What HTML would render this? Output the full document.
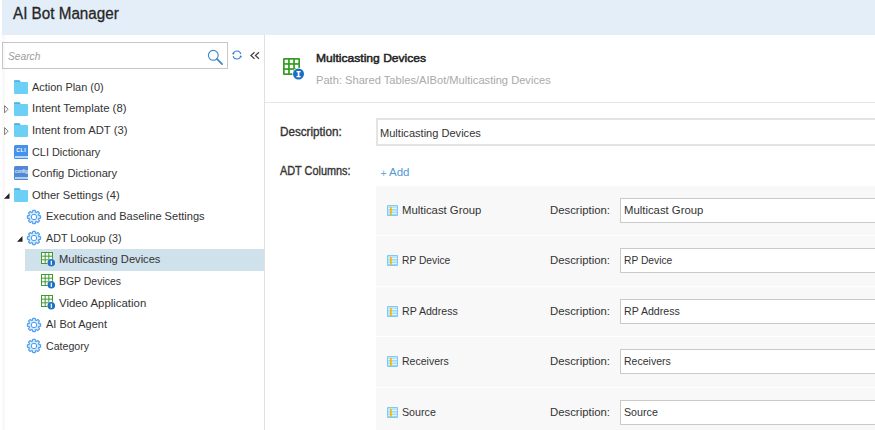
<!DOCTYPE html>
<html><head><meta charset="utf-8">
<style>
*{margin:0;padding:0;box-sizing:border-box}
html,body{width:875px;height:430px;overflow:hidden;background:#fff}
body{position:relative;font-family:"Liberation Sans",sans-serif;color:#333}
.a{position:absolute;display:block}
.t{position:absolute;white-space:nowrap}
.inp{position:absolute;border:1px solid #d0d0d0;background:#fff}
.row{position:absolute;left:376px;width:499px;background:#f8f8f8}
</style></head><body>

<div class="a" style="left:2px;top:0;width:873px;height:35px;background:#e3eef8"></div>
<div class="a" style="left:2px;top:35px;width:3px;height:395px;background:#f9f9f9"></div>
<div id="hdr" class="t" style="left:12.5px;top:4.36px;font-size:16px;line-height:20px;font-weight:normal;font-style:normal;color:#262626;letter-spacing:0.000px;transform:scaleX(0.9516);transform-origin:0 0;-webkit-text-stroke:0.3px #262626">AI Bot Manager</div>
<div class="a" style="left:2px;top:42px;width:226px;height:27px;border:1px solid #c6c6c6"></div>
<div id="search" class="t" style="left:8px;top:49.02px;font-size:11.5px;line-height:14px;font-weight:normal;font-style:italic;color:#9c9c9c;letter-spacing:0.000px;transform:scaleX(0.8889);transform-origin:0 0">Search</div>
<svg class="a" style="left:205px;top:47px" width="20" height="20" viewBox="0 0 20 20"><circle cx="8.3" cy="8.3" r="4.9" fill="none" stroke="#3a86c6" stroke-width="1.1"/><path d="M11.9,11.9 L17.1,17.1" stroke="#3a86c6" stroke-width="1.7" stroke-linecap="round"/></svg>
<svg class="a" style="left:230.5px;top:49.2px" width="12" height="12" viewBox="0 0 12 12"><path d="M2.24,4.68 A4,4 0 0 1 9.86,5.01" fill="none" stroke="#3a86d0" stroke-width="1.05"/><path d="M9.76,7.42 A4,4 0 0 1 2.14,7.09" fill="none" stroke="#3a86d0" stroke-width="1.05"/><circle cx="2.3" cy="4.6" r="1.0" fill="#2f7fcc"/><circle cx="9.7" cy="7.5" r="1.0" fill="#2f7fcc"/></svg>
<svg class="a" style="left:249px;top:50px" width="12" height="11" viewBox="0 0 12 11"><path d="M5.5,2.2 L1.9,5.5 L5.5,8.8 M10,2.2 L6.4,5.5 L10,8.8" fill="none" stroke="#454545" stroke-width="1.25"/></svg>
<div class="a" style="left:264px;top:35px;width:1px;height:395px;background:#e0e0e0"></div>
<div class="a" style="left:25px;top:249px;width:239px;height:21.5px;background:#cfe1eb"></div>
<svg class="a" style="left:14px;top:80.0px" width="14" height="14" viewBox="0 0 14 14"><path d="M1,0.5 H5.5 L6.5,2 H13 Q14,2 14,3 V13 Q14,14 13,14 H1 Q0,14 0,13 V1.5 Q0,0.5 1,0.5Z" fill="#6ccff6"/><path d="M1,0.3 H5.5 L6.8,2 H0 V1.3 Q0,0.3 1,0.3Z" fill="#4fb3de"/></svg>
<div id="tr0" class="t" style="left:32px;top:79.82px;font-size:11.5px;line-height:14px;font-weight:normal;font-style:normal;color:#333;letter-spacing:0.000px;transform:scaleX(0.9496);transform-origin:0 0">Action Plan (0)</div>
<svg class="a" style="left:14px;top:101.6px" width="14" height="14" viewBox="0 0 14 14"><path d="M1,0.5 H5.5 L6.5,2 H13 Q14,2 14,3 V13 Q14,14 13,14 H1 Q0,14 0,13 V1.5 Q0,0.5 1,0.5Z" fill="#6ccff6"/><path d="M1,0.3 H5.5 L6.8,2 H0 V1.3 Q0,0.3 1,0.3Z" fill="#4fb3de"/></svg>
<svg class="a" style="left:3.6px;top:105.0px" width="6" height="9" viewBox="0 0 6 9"><path d="M0.6,0.6 L4.1,4.2 L0.6,7.8Z" fill="none" stroke="#7a7a7a" stroke-width="1"/></svg>
<div id="tr1" class="t" style="left:32px;top:101.40px;font-size:11.5px;line-height:14px;font-weight:normal;font-style:normal;color:#333;letter-spacing:0.000px;transform:scaleX(0.9875);transform-origin:0 0">Intent Template (8)</div>
<svg class="a" style="left:14px;top:123.2px" width="14" height="14" viewBox="0 0 14 14"><path d="M1,0.5 H5.5 L6.5,2 H13 Q14,2 14,3 V13 Q14,14 13,14 H1 Q0,14 0,13 V1.5 Q0,0.5 1,0.5Z" fill="#6ccff6"/><path d="M1,0.3 H5.5 L6.8,2 H0 V1.3 Q0,0.3 1,0.3Z" fill="#4fb3de"/></svg>
<svg class="a" style="left:3.6px;top:126.6px" width="6" height="9" viewBox="0 0 6 9"><path d="M0.6,0.6 L4.1,4.2 L0.6,7.8Z" fill="none" stroke="#7a7a7a" stroke-width="1"/></svg>
<div id="tr2" class="t" style="left:32px;top:122.98px;font-size:11.5px;line-height:14px;font-weight:normal;font-style:normal;color:#333;letter-spacing:0.000px;transform:scaleX(0.9775);transform-origin:0 0">Intent from ADT (3)</div>
<svg class="a" style="left:14px;top:144.5px" width="14" height="14" viewBox="0 0 14 14"><path d="M1.5,0 H14 V11 H2 Q1,11 1,12 Q1,13 2,13 H14 V14 H1.5 Q0,14 0,12.5 V1.5 Q0,0 1.5,0Z" fill="#4592ea"/><rect x="1" y="11" width="13" height="2" rx="1" fill="#b9d8f8"/><text x="7.2" y="6.8" font-size="5" font-weight="bold" fill="#fff" text-anchor="middle" font-family="Liberation Sans" letter-spacing="0.6">CLI</text></svg>
<div id="tr3" class="t" style="left:32px;top:144.56px;font-size:11.5px;line-height:14px;font-weight:normal;font-style:normal;color:#333;letter-spacing:0.000px;transform:scaleX(0.9452);transform-origin:0 0">CLI Dictionary</div>
<svg class="a" style="left:14px;top:166.0px" width="14" height="14" viewBox="0 0 14 14"><path d="M1.5,0 H14 V11 H2 Q1,11 1,12 Q1,13 2,13 H14 V14 H1.5 Q0,14 0,12.5 V1.5 Q0,0 1.5,0Z" fill="#5388d4"/><rect x="1" y="11" width="13" height="2" rx="1" fill="#b5cdef"/><text x="7.3" y="7.2" font-size="4.8" font-weight="bold" fill="#d9e5f7" text-anchor="middle" font-family="Liberation Sans" letter-spacing="-0.25">config</text></svg>
<div id="tr4" class="t" style="left:32px;top:166.14px;font-size:11.5px;line-height:14px;font-weight:normal;font-style:normal;color:#333;letter-spacing:0.000px;transform:scaleX(0.9728);transform-origin:0 0">Config Dictionary</div>
<svg class="a" style="left:14px;top:187.9px" width="14" height="14" viewBox="0 0 14 14"><path d="M1,0.5 H5.5 L6.5,2 H13 Q14,2 14,3 V13 Q14,14 13,14 H1 Q0,14 0,13 V1.5 Q0,0.5 1,0.5Z" fill="#6ccff6"/><path d="M1,0.3 H5.5 L6.8,2 H0 V1.3 Q0,0.3 1,0.3Z" fill="#4fb3de"/></svg>
<svg class="a" style="left:3.8px;top:193.0px" width="6" height="6" viewBox="0 0 6 6"><path d="M5.5,0 V5.8 H0Z" fill="#222"/></svg>
<div id="tr5" class="t" style="left:32px;top:187.72px;font-size:11.5px;line-height:14px;font-weight:normal;font-style:normal;color:#333;letter-spacing:0.000px;transform:scaleX(0.9650);transform-origin:0 0">Other Settings (4)</div>
<svg class="a" style="left:26.299999999999997px;top:208.8px" width="16" height="16" viewBox="-8 -8 16 16"><path d="M-1.64,-4.72 L-1.18,-6.60 L1.18,-6.60 L1.64,-4.72 L2.18,-4.50 L3.83,-5.50 L5.50,-3.83 L4.50,-2.18 L4.72,-1.64 L6.60,-1.18 L6.60,1.18 L4.72,1.64 L4.50,2.18 L5.50,3.83 L3.83,5.50 L2.18,4.50 L1.64,4.72 L1.18,6.60 L-1.18,6.60 L-1.64,4.72 L-2.18,4.50 L-3.83,5.50 L-5.50,3.83 L-4.50,2.18 L-4.72,1.64 L-6.60,1.18 L-6.60,-1.18 L-4.72,-1.64 L-4.50,-2.18 L-5.50,-3.83 L-3.83,-5.50 L-2.18,-4.50Z" fill="#d6e9fc" stroke="#4f9ff2" stroke-width="1.15" stroke-linejoin="round"/><circle r="2.7" fill="none" stroke="#4a9df2" stroke-width="1.0"/><circle r="2.0" fill="#fff"/></svg>
<div id="tr6" class="t" style="left:46px;top:209.30px;font-size:11.5px;line-height:14px;font-weight:normal;font-style:normal;color:#333;letter-spacing:0.000px;transform:scaleX(0.9613);transform-origin:0 0">Execution and Baseline Settings</div>
<svg class="a" style="left:26.299999999999997px;top:230.4px" width="16" height="16" viewBox="-8 -8 16 16"><path d="M-1.64,-4.72 L-1.18,-6.60 L1.18,-6.60 L1.64,-4.72 L2.18,-4.50 L3.83,-5.50 L5.50,-3.83 L4.50,-2.18 L4.72,-1.64 L6.60,-1.18 L6.60,1.18 L4.72,1.64 L4.50,2.18 L5.50,3.83 L3.83,5.50 L2.18,4.50 L1.64,4.72 L1.18,6.60 L-1.18,6.60 L-1.64,4.72 L-2.18,4.50 L-3.83,5.50 L-5.50,3.83 L-4.50,2.18 L-4.72,1.64 L-6.60,1.18 L-6.60,-1.18 L-4.72,-1.64 L-4.50,-2.18 L-5.50,-3.83 L-3.83,-5.50 L-2.18,-4.50Z" fill="#d6e9fc" stroke="#4f9ff2" stroke-width="1.15" stroke-linejoin="round"/><circle r="2.7" fill="none" stroke="#4a9df2" stroke-width="1.0"/><circle r="2.0" fill="#fff"/></svg>
<svg class="a" style="left:17px;top:236.2px" width="6" height="6" viewBox="0 0 6 6"><path d="M5.5,0 V5.8 H0Z" fill="#222"/></svg>
<div id="tr7" class="t" style="left:46px;top:230.88px;font-size:11.5px;line-height:14px;font-weight:normal;font-style:normal;color:#333;letter-spacing:0.000px;transform:scaleX(0.9335);transform-origin:0 0">ADT Lookup (3)</div>
<svg class="a" style="left:40.7px;top:252.2px" width="16" height="16" viewBox="0 0 16 16"><rect x="0" y="0" width="12" height="12" fill="#3b9a2a"/><rect x="0.97" y="0.97" width="2.7" height="2.7" fill="#fff"/><rect x="0.97" y="4.65" width="2.7" height="2.7" fill="#fff"/><rect x="0.97" y="8.32" width="2.7" height="2.7" fill="#fff"/><rect x="4.65" y="0.97" width="2.7" height="2.7" fill="#fff"/><rect x="4.65" y="4.65" width="2.7" height="2.7" fill="#fff"/><rect x="4.65" y="8.32" width="2.7" height="2.7" fill="#fff"/><rect x="8.32" y="0.97" width="2.7" height="2.7" fill="#fff"/><rect x="8.32" y="4.65" width="2.7" height="2.7" fill="#fff"/><rect x="8.32" y="8.32" width="2.7" height="2.7" fill="#fff"/><circle cx="10.3" cy="10.8" r="4.2" fill="#fff" fill-opacity="0.6"/><circle cx="10.3" cy="10.8" r="3.8" fill="#2272c3"/><rect x="9.7" y="8.7" width="1.2" height="4.2" fill="#fff"/></svg>
<div id="tr8" class="t" style="left:59px;top:252.46px;font-size:11.5px;line-height:14px;font-weight:normal;font-style:normal;color:#333;letter-spacing:0.000px;transform:scaleX(0.9677);transform-origin:0 0">Multicasting Devices</div>
<svg class="a" style="left:40.7px;top:273.8px" width="16" height="16" viewBox="0 0 16 16"><rect x="0" y="0" width="12" height="12" fill="#3b9a2a"/><rect x="0.97" y="0.97" width="2.7" height="2.7" fill="#fff"/><rect x="0.97" y="4.65" width="2.7" height="2.7" fill="#fff"/><rect x="0.97" y="8.32" width="2.7" height="2.7" fill="#fff"/><rect x="4.65" y="0.97" width="2.7" height="2.7" fill="#fff"/><rect x="4.65" y="4.65" width="2.7" height="2.7" fill="#fff"/><rect x="4.65" y="8.32" width="2.7" height="2.7" fill="#fff"/><rect x="8.32" y="0.97" width="2.7" height="2.7" fill="#fff"/><rect x="8.32" y="4.65" width="2.7" height="2.7" fill="#fff"/><rect x="8.32" y="8.32" width="2.7" height="2.7" fill="#fff"/><circle cx="10.3" cy="10.8" r="4.2" fill="#fff" fill-opacity="0.6"/><circle cx="10.3" cy="10.8" r="3.8" fill="#2272c3"/><rect x="9.7" y="8.7" width="1.2" height="4.2" fill="#fff"/></svg>
<div id="tr9" class="t" style="left:59px;top:274.04px;font-size:11.5px;line-height:14px;font-weight:normal;font-style:normal;color:#333;letter-spacing:0.000px;transform:scaleX(0.9089);transform-origin:0 0">BGP Devices</div>
<svg class="a" style="left:40.7px;top:295.4px" width="16" height="16" viewBox="0 0 16 16"><rect x="0" y="0" width="12" height="12" fill="#3b9a2a"/><rect x="0.97" y="0.97" width="2.7" height="2.7" fill="#fff"/><rect x="0.97" y="4.65" width="2.7" height="2.7" fill="#fff"/><rect x="0.97" y="8.32" width="2.7" height="2.7" fill="#fff"/><rect x="4.65" y="0.97" width="2.7" height="2.7" fill="#fff"/><rect x="4.65" y="4.65" width="2.7" height="2.7" fill="#fff"/><rect x="4.65" y="8.32" width="2.7" height="2.7" fill="#fff"/><rect x="8.32" y="0.97" width="2.7" height="2.7" fill="#fff"/><rect x="8.32" y="4.65" width="2.7" height="2.7" fill="#fff"/><rect x="8.32" y="8.32" width="2.7" height="2.7" fill="#fff"/><circle cx="10.3" cy="10.8" r="4.2" fill="#fff" fill-opacity="0.6"/><circle cx="10.3" cy="10.8" r="3.8" fill="#2272c3"/><rect x="9.7" y="8.7" width="1.2" height="4.2" fill="#fff"/></svg>
<div id="tr10" class="t" style="left:59px;top:295.62px;font-size:11.5px;line-height:14px;font-weight:normal;font-style:normal;color:#333;letter-spacing:0.000px;transform:scaleX(0.9911);transform-origin:0 0">Video Application</div>
<svg class="a" style="left:26.299999999999997px;top:316.7px" width="16" height="16" viewBox="-8 -8 16 16"><path d="M-1.64,-4.72 L-1.18,-6.60 L1.18,-6.60 L1.64,-4.72 L2.18,-4.50 L3.83,-5.50 L5.50,-3.83 L4.50,-2.18 L4.72,-1.64 L6.60,-1.18 L6.60,1.18 L4.72,1.64 L4.50,2.18 L5.50,3.83 L3.83,5.50 L2.18,4.50 L1.64,4.72 L1.18,6.60 L-1.18,6.60 L-1.64,4.72 L-2.18,4.50 L-3.83,5.50 L-5.50,3.83 L-4.50,2.18 L-4.72,1.64 L-6.60,1.18 L-6.60,-1.18 L-4.72,-1.64 L-4.50,-2.18 L-5.50,-3.83 L-3.83,-5.50 L-2.18,-4.50Z" fill="#d6e9fc" stroke="#4f9ff2" stroke-width="1.15" stroke-linejoin="round"/><circle r="2.7" fill="none" stroke="#4a9df2" stroke-width="1.0"/><circle r="2.0" fill="#fff"/></svg>
<div id="tr11" class="t" style="left:46px;top:317.20px;font-size:11.5px;line-height:14px;font-weight:normal;font-style:normal;color:#333;letter-spacing:0.000px;transform:scaleX(0.9531);transform-origin:0 0">AI Bot Agent</div>
<svg class="a" style="left:26.299999999999997px;top:338.3px" width="16" height="16" viewBox="-8 -8 16 16"><path d="M-1.64,-4.72 L-1.18,-6.60 L1.18,-6.60 L1.64,-4.72 L2.18,-4.50 L3.83,-5.50 L5.50,-3.83 L4.50,-2.18 L4.72,-1.64 L6.60,-1.18 L6.60,1.18 L4.72,1.64 L4.50,2.18 L5.50,3.83 L3.83,5.50 L2.18,4.50 L1.64,4.72 L1.18,6.60 L-1.18,6.60 L-1.64,4.72 L-2.18,4.50 L-3.83,5.50 L-5.50,3.83 L-4.50,2.18 L-4.72,1.64 L-6.60,1.18 L-6.60,-1.18 L-4.72,-1.64 L-4.50,-2.18 L-5.50,-3.83 L-3.83,-5.50 L-2.18,-4.50Z" fill="#d6e9fc" stroke="#4f9ff2" stroke-width="1.15" stroke-linejoin="round"/><circle r="2.7" fill="none" stroke="#4a9df2" stroke-width="1.0"/><circle r="2.0" fill="#fff"/></svg>
<div id="tr12" class="t" style="left:46px;top:338.78px;font-size:11.5px;line-height:14px;font-weight:normal;font-style:normal;color:#333;letter-spacing:0.000px;transform:scaleX(0.9240);transform-origin:0 0">Category</div>
<div class="a" style="left:265px;top:102px;width:610px;height:1px;background:#e6e6e6"></div>
<svg class="a" style="left:283px;top:58px" width="24" height="24" viewBox="0 0 24 24"><rect x="0" y="0" width="17" height="17" rx="1" fill="#319d21"/><rect x="1.70" y="1.70" width="3.4" height="3.4" fill="#fff"/><rect x="1.70" y="6.80" width="3.4" height="3.4" fill="#fff"/><rect x="1.70" y="11.90" width="3.4" height="3.4" fill="#fff"/><rect x="6.80" y="1.70" width="3.4" height="3.4" fill="#fff"/><rect x="6.80" y="6.80" width="3.4" height="3.4" fill="#fff"/><rect x="6.80" y="11.90" width="3.4" height="3.4" fill="#fff"/><rect x="11.90" y="1.70" width="3.4" height="3.4" fill="#fff"/><rect x="11.90" y="6.80" width="3.4" height="3.4" fill="#fff"/><rect x="11.90" y="11.90" width="3.4" height="3.4" fill="#fff"/><circle cx="15.5" cy="16" r="6.2" fill="#fff"/><circle cx="15.5" cy="16" r="5.5" fill="#1b6fc4"/><rect x="14.7" y="13.4" width="1.7" height="5.4" fill="#fff"/><rect x="13.5" y="13" width="4.1" height="1.3" fill="#fff"/><rect x="13.5" y="18" width="4.1" height="1.3" fill="#fff"/></svg>
<div id="title" class="t" style="left:316px;top:51.41px;font-size:11.8px;line-height:15px;font-weight:normal;font-style:normal;color:#222;letter-spacing:0.000px;transform:scaleX(1.0239);transform-origin:0 0;-webkit-text-stroke:0.5px #222">Multicasting Devices</div>
<div id="path" class="t" style="left:316px;top:72.92px;font-size:11.5px;line-height:14px;font-weight:normal;font-style:normal;color:#aaa;letter-spacing:0.000px;transform:scaleX(0.9671);transform-origin:0 0">Path: Shared Tables/AIBot/Multicasting Devices</div>
<div id="lbl1" class="t" style="left:280px;top:125.04px;font-size:12px;line-height:15px;font-weight:normal;font-style:normal;color:#333;letter-spacing:0.000px;transform:scaleX(0.9728);transform-origin:0 0;-webkit-text-stroke:0.35px #333">Description:</div>
<div class="inp" style="left:376px;top:118px;width:520px;height:28px;border-color:#e4e4e4;border-width:2px"></div>
<div id="inp1" class="t" style="left:380px;top:125.82px;font-size:11.5px;line-height:14px;font-weight:normal;font-style:normal;color:#333;letter-spacing:0.000px;transform:scaleX(0.9619);transform-origin:0 0">Multicasting Devices</div>
<div id="lbl2" class="t" style="left:279.5px;top:164.44px;font-size:12px;line-height:15px;font-weight:normal;font-style:normal;color:#333;letter-spacing:0.000px;transform:scaleX(0.9069);transform-origin:0 0;-webkit-text-stroke:0.35px #333">ADT Columns:</div>
<div id="plus" class="t" style="left:380.5px;top:166.86px;font-size:10.5px;line-height:13px;font-weight:normal;font-style:normal;color:#6aa5dd;letter-spacing:0.000px">+</div>
<div id="add" class="t" style="left:389px;top:165.02px;font-size:11.5px;line-height:14px;font-weight:normal;font-style:normal;color:#5597d8;letter-spacing:0.000px">Add</div>
<div class="row" style="top:186.0px;height:49.4px"></div>
<svg class="a" style="left:387px;top:205.0px" width="11" height="11" viewBox="0 0 11 11"><rect x="0" y="0" width="11" height="11" rx="1" fill="#7dcbf4"/><rect x="1" y="1" width="9" height="9" fill="#9cd8f8"/><rect x="1" y="1" width="9" height="1.6" fill="#c4e8fb"/><rect x="1" y="3.0" width="9" height="0.9" fill="#eef8fe"/><rect x="1" y="5.6" width="9" height="0.9" fill="#eef8fe"/><rect x="1" y="7.9" width="9" height="0.9" fill="#eef8fe"/><rect x="3" y="1.8" width="1.7" height="8.2" fill="#f6b800"/></svg>
<div id="rn0" class="t" style="left:402px;top:202.92px;font-size:11.5px;line-height:14px;font-weight:normal;font-style:normal;color:#333;letter-spacing:0.000px;transform:scaleX(0.9853);transform-origin:0 0">Multicast Group</div>
<div id="rd0" class="t" style="left:550px;top:202.92px;font-size:11.5px;line-height:14px;font-weight:normal;font-style:normal;color:#333;letter-spacing:0.000px;transform:scaleX(0.9870);transform-origin:0 0">Description:</div>
<div class="inp" style="left:620px;top:198.0px;width:300px;height:25px;border-color:#cacaca"></div>
<div id="ri0" class="t" style="left:624px;top:202.92px;font-size:11.5px;line-height:14px;font-weight:normal;font-style:normal;color:#333;letter-spacing:0.000px;transform:scaleX(0.9853);transform-origin:0 0">Multicast Group</div>
<div class="row" style="top:236.4px;height:49.4px"></div>
<svg class="a" style="left:387px;top:255.4px" width="11" height="11" viewBox="0 0 11 11"><rect x="0" y="0" width="11" height="11" rx="1" fill="#7dcbf4"/><rect x="1" y="1" width="9" height="9" fill="#9cd8f8"/><rect x="1" y="1" width="9" height="1.6" fill="#c4e8fb"/><rect x="1" y="3.0" width="9" height="0.9" fill="#eef8fe"/><rect x="1" y="5.6" width="9" height="0.9" fill="#eef8fe"/><rect x="1" y="7.9" width="9" height="0.9" fill="#eef8fe"/><rect x="3" y="1.8" width="1.7" height="8.2" fill="#f6b800"/></svg>
<div id="rn1" class="t" style="left:402px;top:253.32px;font-size:11.5px;line-height:14px;font-weight:normal;font-style:normal;color:#333;letter-spacing:0.000px;transform:scaleX(0.8928);transform-origin:0 0">RP Device</div>
<div id="rd1" class="t" style="left:550px;top:253.32px;font-size:11.5px;line-height:14px;font-weight:normal;font-style:normal;color:#333;letter-spacing:0.000px;transform:scaleX(0.9870);transform-origin:0 0">Description:</div>
<div class="inp" style="left:620px;top:248.4px;width:300px;height:25px;border-color:#cacaca"></div>
<div id="ri1" class="t" style="left:624px;top:253.32px;font-size:11.5px;line-height:14px;font-weight:normal;font-style:normal;color:#333;letter-spacing:0.000px;transform:scaleX(0.8928);transform-origin:0 0">RP Device</div>
<div class="row" style="top:286.8px;height:49.4px"></div>
<svg class="a" style="left:387px;top:305.8px" width="11" height="11" viewBox="0 0 11 11"><rect x="0" y="0" width="11" height="11" rx="1" fill="#7dcbf4"/><rect x="1" y="1" width="9" height="9" fill="#9cd8f8"/><rect x="1" y="1" width="9" height="1.6" fill="#c4e8fb"/><rect x="1" y="3.0" width="9" height="0.9" fill="#eef8fe"/><rect x="1" y="5.6" width="9" height="0.9" fill="#eef8fe"/><rect x="1" y="7.9" width="9" height="0.9" fill="#eef8fe"/><rect x="3" y="1.8" width="1.7" height="8.2" fill="#f6b800"/></svg>
<div id="rn2" class="t" style="left:402px;top:303.72px;font-size:11.5px;line-height:14px;font-weight:normal;font-style:normal;color:#333;letter-spacing:0.000px;transform:scaleX(0.9214);transform-origin:0 0">RP Address</div>
<div id="rd2" class="t" style="left:550px;top:303.72px;font-size:11.5px;line-height:14px;font-weight:normal;font-style:normal;color:#333;letter-spacing:0.000px;transform:scaleX(0.9870);transform-origin:0 0">Description:</div>
<div class="inp" style="left:620px;top:298.8px;width:300px;height:25px;border-color:#cacaca"></div>
<div id="ri2" class="t" style="left:624px;top:303.72px;font-size:11.5px;line-height:14px;font-weight:normal;font-style:normal;color:#333;letter-spacing:0.000px;transform:scaleX(0.9214);transform-origin:0 0">RP Address</div>
<div class="row" style="top:337.2px;height:49.4px"></div>
<svg class="a" style="left:387px;top:356.2px" width="11" height="11" viewBox="0 0 11 11"><rect x="0" y="0" width="11" height="11" rx="1" fill="#7dcbf4"/><rect x="1" y="1" width="9" height="9" fill="#9cd8f8"/><rect x="1" y="1" width="9" height="1.6" fill="#c4e8fb"/><rect x="1" y="3.0" width="9" height="0.9" fill="#eef8fe"/><rect x="1" y="5.6" width="9" height="0.9" fill="#eef8fe"/><rect x="1" y="7.9" width="9" height="0.9" fill="#eef8fe"/><rect x="3" y="1.8" width="1.7" height="8.2" fill="#f6b800"/></svg>
<div id="rn3" class="t" style="left:402px;top:354.12px;font-size:11.5px;line-height:14px;font-weight:normal;font-style:normal;color:#333;letter-spacing:0.000px;transform:scaleX(0.9141);transform-origin:0 0">Receivers</div>
<div id="rd3" class="t" style="left:550px;top:354.12px;font-size:11.5px;line-height:14px;font-weight:normal;font-style:normal;color:#333;letter-spacing:0.000px;transform:scaleX(0.9870);transform-origin:0 0">Description:</div>
<div class="inp" style="left:620px;top:349.2px;width:300px;height:25px;border-color:#cacaca"></div>
<div id="ri3" class="t" style="left:624px;top:354.12px;font-size:11.5px;line-height:14px;font-weight:normal;font-style:normal;color:#333;letter-spacing:0.000px;transform:scaleX(0.9141);transform-origin:0 0">Receivers</div>
<div class="row" style="top:387.6px;height:49.4px"></div>
<svg class="a" style="left:387px;top:406.6px" width="11" height="11" viewBox="0 0 11 11"><rect x="0" y="0" width="11" height="11" rx="1" fill="#7dcbf4"/><rect x="1" y="1" width="9" height="9" fill="#9cd8f8"/><rect x="1" y="1" width="9" height="1.6" fill="#c4e8fb"/><rect x="1" y="3.0" width="9" height="0.9" fill="#eef8fe"/><rect x="1" y="5.6" width="9" height="0.9" fill="#eef8fe"/><rect x="1" y="7.9" width="9" height="0.9" fill="#eef8fe"/><rect x="3" y="1.8" width="1.7" height="8.2" fill="#f6b800"/></svg>
<div id="rn4" class="t" style="left:402px;top:404.52px;font-size:11.5px;line-height:14px;font-weight:normal;font-style:normal;color:#333;letter-spacing:0.000px;transform:scaleX(0.9287);transform-origin:0 0">Source</div>
<div id="rd4" class="t" style="left:550px;top:404.52px;font-size:11.5px;line-height:14px;font-weight:normal;font-style:normal;color:#333;letter-spacing:0.000px;transform:scaleX(0.9870);transform-origin:0 0">Description:</div>
<div class="inp" style="left:620px;top:399.6px;width:300px;height:25px;border-color:#cacaca"></div>
<div id="ri4" class="t" style="left:624px;top:404.52px;font-size:11.5px;line-height:14px;font-weight:normal;font-style:normal;color:#333;letter-spacing:0.000px;transform:scaleX(0.9287);transform-origin:0 0">Source</div>
</body></html>
